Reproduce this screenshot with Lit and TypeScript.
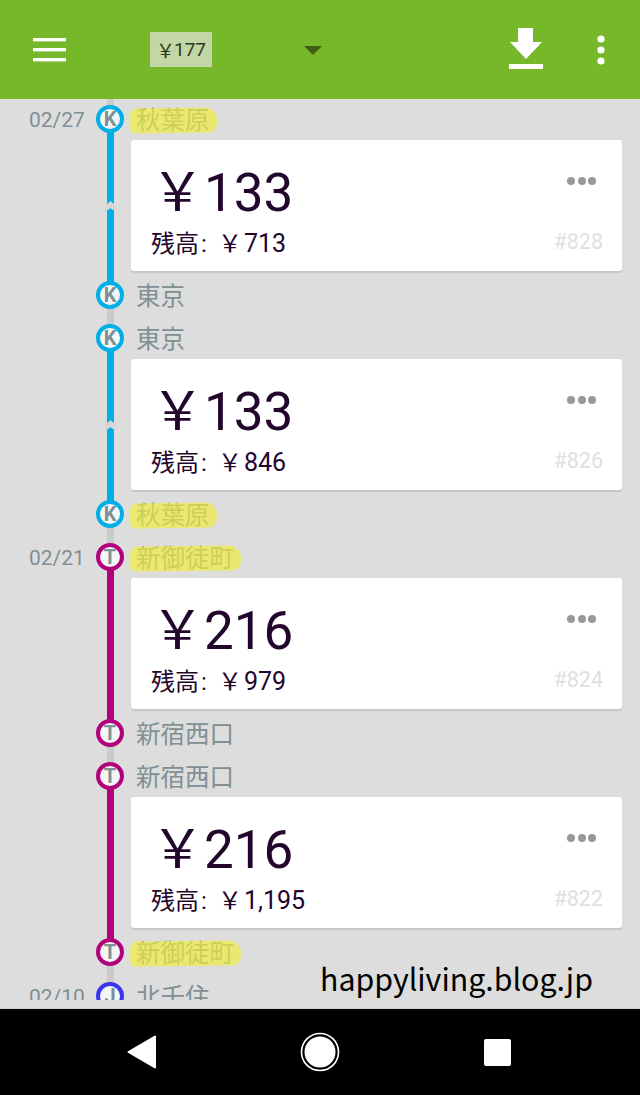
import { LitElement, html, css } from "lit";
import { customElement } from "lit/decorators.js";

type Stop = { name: string; mark?: boolean; date?: string };
type Trip = { color: string; letter: string; split: boolean; from: Stop; to: Stop; fare: string; bal: string; id: string };

const BLUE = "#00afe6", MAG = "#b3007d";
const trips: Trip[] = [
  { color: BLUE, letter: "K", split: true, from: { name: "秋葉原", mark: true, date: "02/27" }, to: { name: "東京" }, fare: "133", bal: "713", id: "#828" },
  { color: BLUE, letter: "K", split: true, from: { name: "東京" }, to: { name: "秋葉原", mark: true }, fare: "133", bal: "846", id: "#826" },
  { color: MAG, letter: "T", split: false, from: { name: "新御徒町", mark: true, date: "02/21" }, to: { name: "新宿西口" }, fare: "216", bal: "979", id: "#824" },
  { color: MAG, letter: "T", split: false, from: { name: "新宿西口" }, to: { name: "新御徒町", mark: true }, fare: "216", bal: "1,195", id: "#822" },
];

@customElement("app-root")
export class AppRoot extends LitElement {
  static styles = css`
    :host { display: block; width: 640px; height: 1095px; overflow: hidden;
      font-family: Roboto, "Noto Sans CJK JP", sans-serif; }
    .page { display: flex; flex-direction: column; height: 1095px; background: #dddddd; }
    .bar { flex: 0 0 99px; background: #76b82a; display: flex; align-items: center; position: relative; padding-left: 33px; box-sizing: border-box; }
    .bar svg { display: block; }
    .badge { margin-left: 84px; width: 62px; height: 35px; margin-top: -1px; background: #c2d7a5; color: #2b3a1c; font-size: 19px; display: flex; align-items: center; justify-content: center; }
    .badge i { font-style: normal; width: 18px; }
    .tri { margin-left: 92px; margin-top: 1px; }
    .dl { margin-left: 187px; margin-top: -2px; }
    .kebab { margin-left: 54px; }
    .content { flex: 1; position: relative; overflow: hidden; border-bottom: 1px solid #cdcdcd; }
    .rail { position: absolute; left: 107px; top: 0; bottom: 8px; width: 7px; background: #cbcbcb; }
    .trip { position: relative; padding-bottom: 3px; }
    .line { position: absolute; left: 107px; top: 30px; height: 160px; width: 7px; }
    .line.split::after { content: ""; position: absolute; left: -2px; top: 72px; width: 11px; height: 11px; background: #d6d6d6;
      clip-path: polygon(50% 0, 100% 45%, 100% 100%, 50% 65%, 0 100%, 0 45%); }
    .stop { position: relative; height: 40px; display: flex; align-items: center; padding-left: 29px; box-sizing: border-box; }
    .stop.last { margin-top: 4px; }
    .date { width: 67px; font-size: 21px; color: #7f8f94; position: relative; top: 1px; }
    .node { flex: none; width: 28px; height: 28px; box-sizing: border-box; border-radius: 50%; border: 4px solid; background: #f4f7f7; color: #7f8f94;
      font: 700 20px/21px Roboto, sans-serif; text-align: center; }
    .name { position: relative; margin-left: 12px; font-size: 24.5px; line-height: 32px; color: #7f8f94; top: 2px; white-space: nowrap; }
    .name.mark::after { content: ""; position: absolute; left: -6px; right: -7px; top: 2.5px; bottom: 5px; background: rgba(240, 238, 60, .68); border-radius: 7px 12px 9px 5px; transform: rotate(-.7deg); }
    .card { position: relative; margin: 1px 18px 0 131px; height: 131px; box-sizing: border-box; background: #fff; border-radius: 3px; box-shadow: 0 2px 1px #c6c6c6; padding: 18px 20px 0; color: #22062c; }
    .fare { font-size: 53px; line-height: 70px; height: 70px; white-space: nowrap; }
    .bal { font-size: 24px; line-height: 34px; white-space: nowrap; margin-top: -1px; display: flex; }
    .bal i { font-style: normal; display: block; }
    .bal .c { width: 19px; padding-left: 2px; box-sizing: border-box; }
    .bal .y { width: 26px; }
    .bal .n { font-size: 25px; }
    .more { position: absolute; right: 26px; top: 37px; display: flex; gap: 2.5px; }
    .more b { width: 8px; height: 8px; border-radius: 50%; background: #989898; }
    .id { position: absolute; right: 19px; top: 88px; font-size: 21.5px; line-height: 28px; color: #dfdfdf; }
    .peek { position: relative; height: 25px; overflow: hidden; padding: 7px 0 0 29px; box-sizing: border-box; display: flex; align-items: flex-start; }
    .peek .name { top: 0; }
    .peek .date { top: 3px; }
    .wm { position: absolute; left: 320px; top: 856px; font: 30.3px/46px "Noto Sans CJK JP", sans-serif; color: #000; white-space: nowrap; }
    .nav { flex: 0 0 86px; background: #000; display: flex; align-items: center; position: relative; }
    .nav svg { display: block; }
    .nav .b { margin-left: 127px; }
    .nav .h { margin-left: 143px; }
    .nav .s { margin-left: 144px; }
  `;

  private stop(s: Stop, t: Trip, last = false) {
    return html`<div class="stop ${last ? "last" : ""}">
      <div class="date">${s.date ?? ""}</div>
      <div class="node" style="border-color:${t.color}">${t.letter}</div>
      <div class="name ${s.mark ? "mark" : ""}">${s.name}</div>
    </div>`;
  }

  render() {
    return html`<div class="page">
      <header class="bar">
        <svg width="33" height="24" viewBox="0 0 33 24" fill="#fff"><rect y="0" width="33" height="3.4"/><rect y="10" width="33" height="3.4"/><rect y="20" width="33" height="3.4"/></svg>
        <div class="badge"><i>￥</i>177</div>
        <svg class="tri" width="18" height="9" viewBox="0 0 18 9"><path d="M0 0H18L9 9Z" fill="#3f5f17"/></svg>
        <svg class="dl" width="34" height="42" viewBox="0 0 34 42" fill="#fff"><path d="M9 0H24V14H33L17 31 1 14H9Z"/><rect y="36" width="34" height="5"/></svg>
        <svg class="kebab" width="8" height="30" viewBox="0 0 8 30" fill="#fff"><circle cx="4" cy="4" r="3.6"/><circle cx="4" cy="15" r="3.6"/><circle cx="4" cy="26" r="3.6"/></svg>
      </header>
      <main class="content">
        <div class="rail"></div>
        ${trips.map(t => html`<section class="trip">
          <div class="line ${t.split ? "split" : ""}" style="background:${t.color}"></div>
          ${this.stop(t.from, t)}
          <div class="card">
            <div class="fare">￥${t.fare}</div>
            <div class="bal">残高<i class="c">:</i><i class="y">￥</i><span class="n">${t.bal}</span></div>
            <div class="more"><b></b><b></b><b></b></div>
            <div class="id">${t.id}</div>
          </div>
          ${this.stop(t.to, t, true)}
        </section>`)}
        <div class="peek">
          <div class="date">02/10</div>
          <div class="node" style="border-color:#3a35f0">J</div>
          <div class="name">北千住</div>
        </div>
        <div class="wm">happyliving.blog.jp</div>
      </main>
      <footer class="nav">
        <svg class="b" width="30" height="34" viewBox="0 0 30 34"><path d="M28 1.5V32.5L1.5 17Z" fill="#fff" stroke="#fff" stroke-width="2" stroke-linejoin="round"/></svg>
        <svg class="h" width="40" height="40" viewBox="0 0 40 40"><circle cx="20" cy="20" r="18.5" fill="none" stroke="#fff" stroke-width="1.6"/><circle cx="20" cy="20" r="15.5" fill="#fff"/></svg>
        <svg class="s" width="27" height="27" viewBox="0 0 27 27"><rect width="27" height="27" rx="2" fill="#fff"/></svg>
      </footer>
    </div>`;
  }
}
